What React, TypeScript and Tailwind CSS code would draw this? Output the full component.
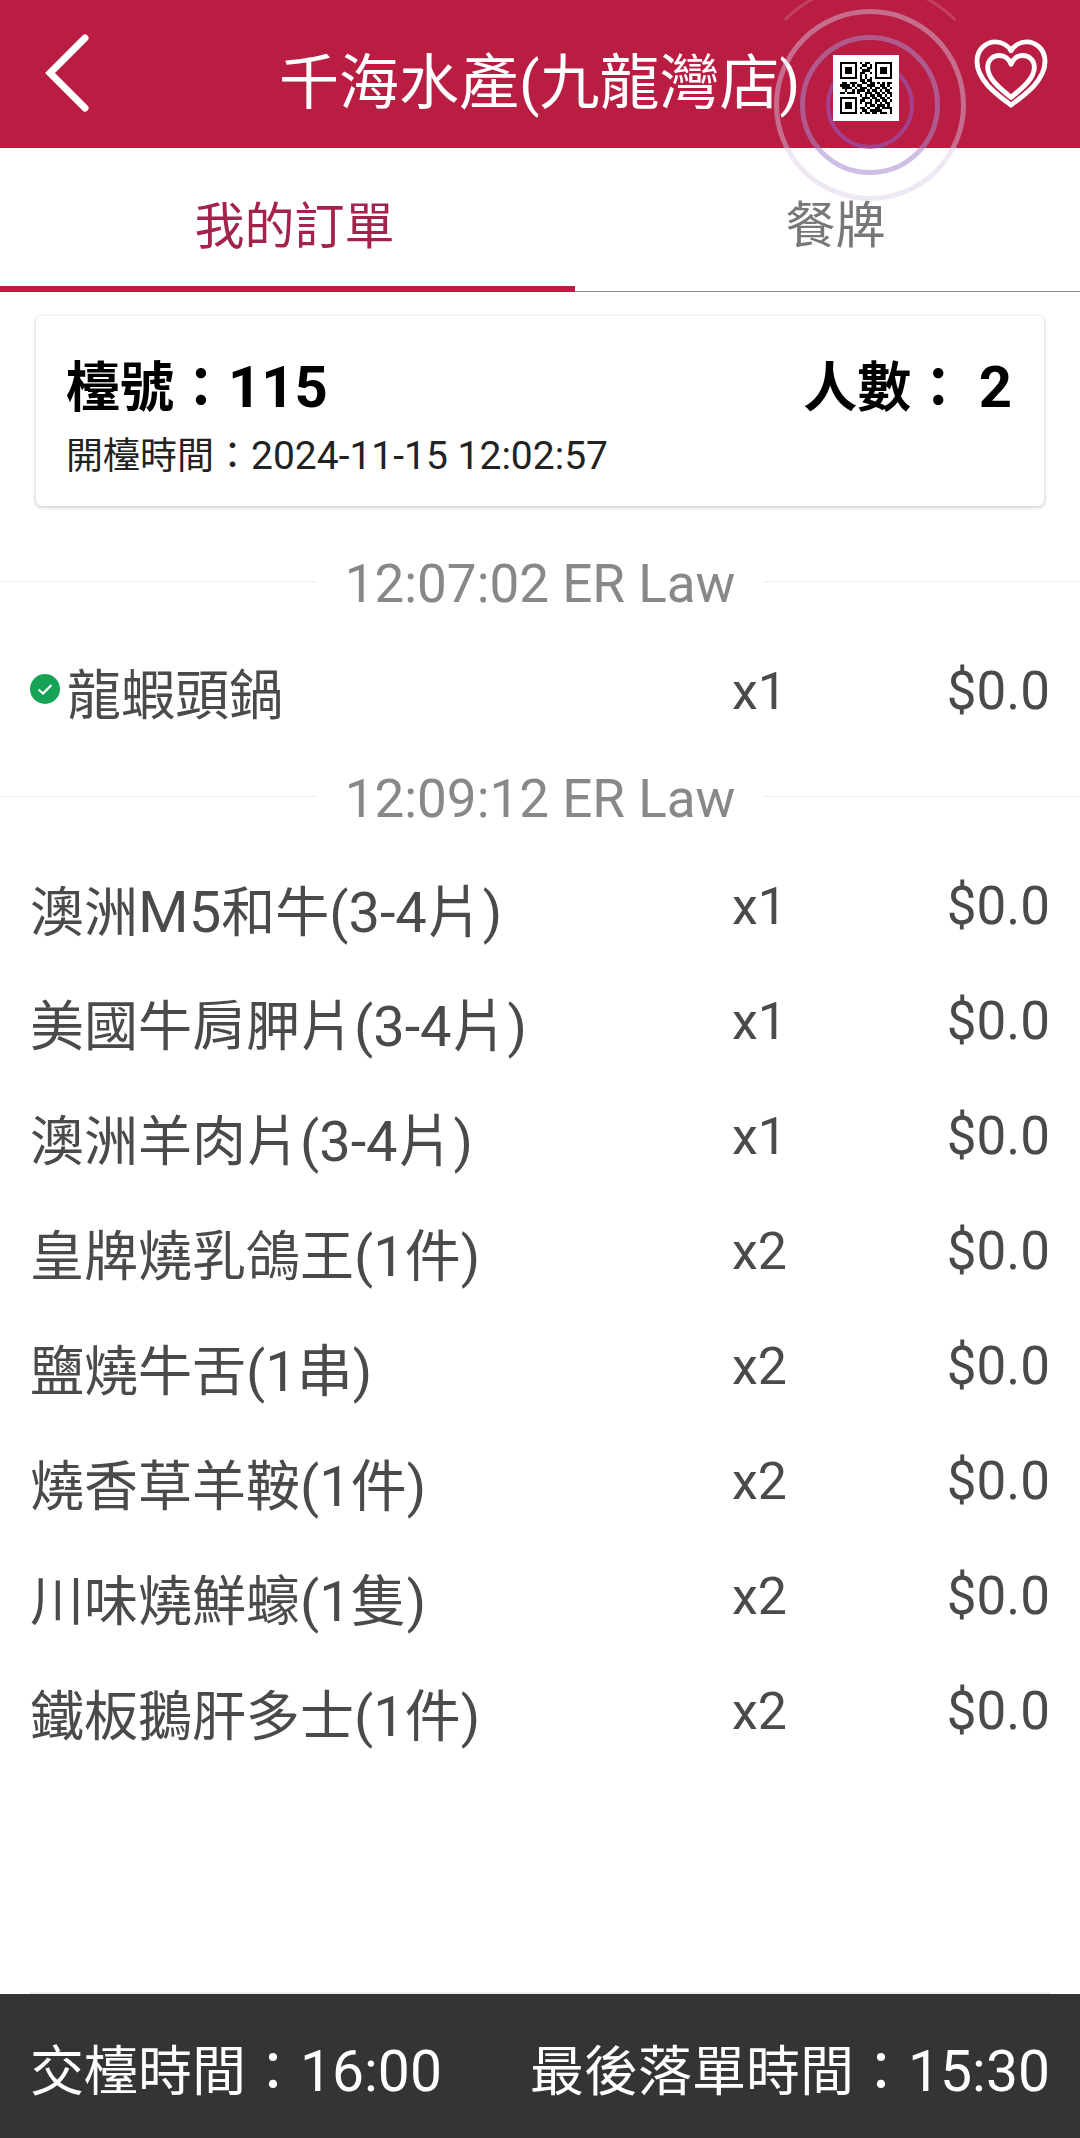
import type { ReactNode } from "react";

const cjk = "font-['Roboto','Noto_Sans_CJK_TC',sans-serif]";

function QrCode() {
  const rows = [
    "111111101011001111111",
    "100000100110101000001",
    "101110101001101011101",
    "101110100111001011101",
    "101110101100101011101",
    "100000101010001000001",
    "111111101010101111111",
    "000000001101100000000",
    "011011100110110101011",
    "111101011001110011010",
    "011110101110101101101",
    "001001011101011010110",
    "110111010011101101011",
    "000000001010110110101",
    "111111100111011011010",
    "100000101100101101101",
    "101110101011101010110",
    "101110100010110111010",
    "101110101101001101111",
    "100000100110111110001",
    "111111101011011011101",
  ];
  return (
    <svg viewBox="-2.6 -2.6 26.2 26.2" className="block w-[66px] h-[66px] bg-white" shapeRendering="crispEdges">
      {rows.map((row, y) =>
        row.split("").map((c, x) => (c === "1" ? <rect key={`${x}-${y}`} x={x} y={y} width="1" height="1" fill="#000" /> : null))
      )}
    </svg>
  );
}

function HeartIcon() {
  return (
    <svg viewBox="0 0 76 72" className="block w-[74px] h-[70px]" fill="none" stroke="#fff" strokeWidth="5" strokeLinejoin="round">
      <path d="M38 68 C22 56 3 42 3 23 C3 10 13 3 22 3 C29 3 35 7 38 12 C41 7 47 3 54 3 C63 3 73 10 73 23 C73 42 54 56 38 68 Z" />
      <path d="M38 60 C27 51 14 41 14 29 C14 21 20 17 26 17 C31 17 36 20 38 26 C40 20 45 17 50 17 C56 17 62 21 62 29 C62 41 49 51 38 60 Z" />
    </svg>
  );
}

function Divider({ text }: { text: string }) {
  return (
    <div className="h-[100px] flex items-center">
      <div className="flex-1 h-px bg-[#eeeeee]" />
      <span className="px-7 pt-[6px] text-[53px] leading-none text-[#888888] whitespace-nowrap">{text}</span>
      <div className="flex-1 h-px bg-[#eeeeee]" />
    </div>
  );
}

function Row({ name, unit, qty, done }: { name: ReactNode; unit?: string; qty: string; done?: boolean }) {
  return (
    <div className="h-[115px] flex items-center px-[30px] pt-[6px] text-[#4a4a4a]">
      <div className="w-[702px] flex items-center pt-[10px] text-[54px] leading-none whitespace-nowrap">
        {done && (
          <svg viewBox="0 0 30 30" className="w-[30px] h-[30px] mr-[7px] mb-[16px]">
            <circle cx="15" cy="15" r="15" fill="#16a356" />
            <path d="M8.5 15.5l4.5 4 8.5-8.5" fill="none" stroke="#fff" strokeWidth="2.2" />
          </svg>
        )}
        <span>
          {name}
          {unit && <span className="text-[56px]">{unit}</span>}
        </span>
      </div>
      <div className="text-[52px] leading-none">{qty}</div>
      <div className="ml-auto text-[53px] leading-none">$0.0</div>
    </div>
  );
}

export default function App() {
  return (
    <div className={`${cjk} relative w-[1080px] h-[2138px] overflow-hidden bg-white flex flex-col`}>
      <header className="h-[148px] shrink-0 bg-[#b91e42] flex items-center text-white">
        <svg viewBox="0 0 48 78" className="w-[48px] h-[78px] ml-[44px] mb-[2px]" fill="none" stroke="#fff" strokeWidth="7" strokeLinecap="round">
          <path d="M41 4 L6 39 L41 74" />
        </svg>
        <h1 className="ml-[187px] mt-[20px] text-[60px] leading-none font-normal whitespace-nowrap">千海水產(九龍灣店)</h1>
        <div className="relative z-10 ml-[33px] mt-[28px]">
          <QrCode />
        </div>
        <div className="ml-[75px]">
          <HeartIcon />
        </div>
      </header>

      <nav className="h-[144px] shrink-0 flex border-b border-[#8f8f8f] text-[50px]">
        <div className="w-[575px] h-[144px] flex items-center justify-center text-[#a3244a] border-b-[6px] border-[#b91e42] pt-[20px] pl-[14px]">我的訂單</div>
        <div className="flex-1 flex items-center justify-center text-[#777777] pt-[14px] pl-[16px]">餐牌</div>
      </nav>

      <section className="mx-[36px] mt-6 h-[190px] shrink-0 rounded-md bg-white shadow-[0_1px_4px_rgba(0,0,0,0.25)] pl-[30px] pr-[32px] pt-[40px] text-black">
        <div className="flex justify-between items-center text-[54px] leading-[62px] font-bold">
          <span>
            檯號：<span className="text-[58px]">115</span>
          </span>
          <span>
            人數： <span className="text-[58px]">2</span>
          </span>
        </div>
        <div className="mt-[13px] text-[37px] leading-[46px] text-[#222222]">
          開檯時間：<span className="text-[39px]">2024-11-15 12:02:57</span>
        </div>
      </section>

      <main className="mt-[25px]">
        <Divider text="12:07:02 ER Law" />
        <Row name="龍蝦頭鍋" qty="x1" done />
        <Divider text="12:09:12 ER Law" />
        <Row name={<>澳洲<span className="text-[58px]">M5</span>和牛</>} unit="(3-4片)" qty="x1" />
        <Row name="美國牛肩胛片" unit="(3-4片)" qty="x1" />
        <Row name="澳洲羊肉片" unit="(3-4片)" qty="x1" />
        <Row name="皇牌燒乳鴿王" unit="(1件)" qty="x2" />
        <Row name="鹽燒牛舌" unit="(1串)" qty="x2" />
        <Row name="燒香草羊鞍" unit="(1件)" qty="x2" />
        <Row name="川味燒鮮蠔" unit="(1隻)" qty="x2" />
        <Row name="鐵板鵝肝多士" unit="(1件)" qty="x2" />
      </main>

      <div className="mt-auto mx-[30px] h-[2px] shrink-0 bg-[#eef0f0]" />
      <footer className="h-[144px] shrink-0 bg-[#323533] text-white flex items-center justify-between px-[30px] pt-[10px] text-[54px] leading-none whitespace-nowrap">
        <span>
          交檯時間：<span className="text-[57px]">16:00</span>
        </span>
        <span>
          最後落單時間：<span className="text-[57px]">15:30</span>
        </span>
      </footer>

      {/* pulse rings around the QR button */}
      <div className="absolute left-[826px] top-[61px] w-[88px] h-[88px] rounded-full border-[4px] border-[#9c4fb0]/70 pointer-events-none" />
      <div className="absolute left-[800px] top-[35px] w-[140px] h-[140px] rounded-full border-[5px] border-[#a98ad0]/55 pointer-events-none" />
      <div className="absolute left-[774px] top-[9px] w-[192px] h-[192px] rounded-full border-[5px] border-[#d9cbe6]/45 pointer-events-none" />
      <div className="absolute left-[748px] top-[-17px] w-[244px] h-[244px] rounded-full border-[3px] border-transparent border-t-white/15 pointer-events-none" />
    </div>
  );
}
